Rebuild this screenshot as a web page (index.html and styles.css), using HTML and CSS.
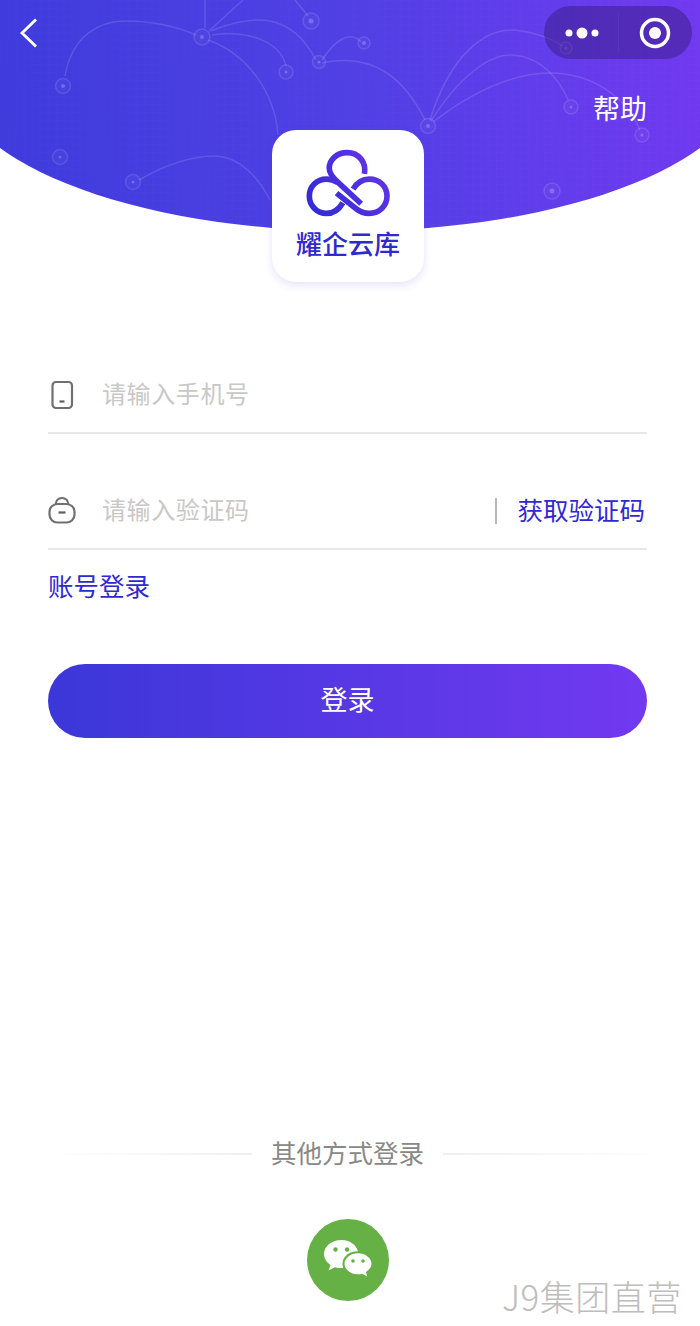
FILE: index.html
```html
<!DOCTYPE html>
<html lang="zh-CN">
<head>
<meta charset="utf-8">
<title>耀企云库</title>
<link rel="stylesheet" href="styles.css">
</head>
<body>
<div class="page">
  <header class="hero">
    <svg class="hero-bg" viewBox="0 0 700 232" width="700" height="232" aria-hidden="true">
      <defs>
        <linearGradient id="heroGrad" gradientUnits="userSpaceOnUse" x1="0" y1="120" x2="700" y2="60">
          <stop offset="0" stop-color="#3f3bdd"/>
          <stop offset="0.5" stop-color="#5040e5"/>
          <stop offset="1" stop-color="#7139f0"/>
        </linearGradient>
        <pattern id="grid" width="8" height="8" patternUnits="userSpaceOnUse">
          <path d="M8 0H0V8" fill="none" stroke="#ffffff" stroke-opacity="0.012"/>
        </pattern>
      </defs>
      <ellipse cx="350" cy="70" rx="400" ry="161" fill="url(#heroGrad)"/>
      <ellipse cx="350" cy="70" rx="400" ry="161" fill="url(#grid)"/>
      <g class="net">
        <path d="M65 76C72 35 100 21 125 21C155 21 180 28 196 35"/>
        <path d="M212 35C245 30 280 40 286 66"/>
        <path d="M208 40C250 55 275 95 278 135"/>
        <path d="M205 28V0"/>
        <path d="M209 31L243 0"/>
        <path d="M211 31C250 15 290 10 316 60"/>
        <path d="M295 0L308 16"/>
        <path d="M322 60C335 40 350 30 361 42"/>
        <path d="M322 63C375 52 405 80 425 120"/>
        <path d="M430 120C450 55 485 28 515 30C535 32 550 38 563 46"/>
        <path d="M431 121C460 75 490 55 510 55C540 55 560 80 568 100"/>
        <path d="M433 122C475 90 515 73 550 73C590 73 625 95 640 130"/>
        <path d="M139 180C165 165 190 156 215 156C240 156 260 180 270 200"/>
      </g>
      <g class="nodes">
        <circle cx="63" cy="86" r="7.500"/><circle cx="202" cy="37" r="8"/>
        <circle cx="286" cy="72" r="7"/><circle cx="311" cy="21" r="8"/>
        <circle cx="319" cy="62" r="6.500"/><circle cx="364" cy="43" r="6"/>
        <circle cx="60" cy="157" r="7.500"/><circle cx="133" cy="182" r="7.500"/>
        <circle cx="428" cy="126" r="7.500"/><circle cx="566" cy="48" r="6"/>
        <circle cx="571" cy="107" r="7"/><circle cx="642" cy="135" r="7"/>
        <circle cx="552" cy="191" r="8"/>
      </g>
      <g class="dots">
        <circle cx="63" cy="86" r="2"/><circle cx="202" cy="37" r="2"/>
        <circle cx="286" cy="72" r="1.500"/><circle cx="311" cy="21" r="2.500"/>
        <circle cx="319" cy="62" r="1.500"/><circle cx="364" cy="43" r="2"/>
        <circle cx="60" cy="157" r="1.500"/><circle cx="133" cy="182" r="1.500"/>
        <circle cx="428" cy="126" r="2"/><circle cx="566" cy="48" r="1.500"/>
        <circle cx="571" cy="107" r="1.500"/><circle cx="642" cy="135" r="1.500"/>
        <circle cx="552" cy="191" r="2.500"/>
      </g>
    </svg>
    <svg class="back" viewBox="0 0 20 32" width="20" height="32" aria-hidden="true">
      <path d="M17 2.500L3 16L17 29.500" fill="none" stroke="#fff" stroke-width="2.800"/>
    </svg>
    <div class="capsule">
      <svg class="capsule-more" viewBox="0 0 40 12" width="40" height="12" aria-hidden="true">
        <circle cx="5" cy="6" r="3.500"/><circle cx="18" cy="6" r="5.500"/><circle cx="31" cy="6" r="3.500"/>
      </svg>
      <span class="capsule-line"></span>
      <svg class="capsule-close" viewBox="0 0 32 32" width="32" height="32" aria-hidden="true">
        <circle cx="16" cy="16" r="13.500" fill="none" stroke="#fff" stroke-width="3.500"/>
        <circle cx="16" cy="16" r="6" fill="#fff"/>
      </svg>
    </div>
    <a class="help">帮助</a>
    <div class="logo">
      <svg class="logo-mark" viewBox="130 80 265 215" width="88" height="72" aria-hidden="true">
        <defs>
          <linearGradient id="logoGrad" gradientUnits="userSpaceOnUse" x1="140" y1="280" x2="385" y2="90">
            <stop offset="0" stop-color="#2f2bd8"/>
            <stop offset="1" stop-color="#6a35e8"/>
          </linearGradient>
        </defs>
        <path class="logo-path" d="M312 160C318 125 295 96 260 96C228 96 206 118 206 143C206 160 220 175 235 188L302 250"/>
        <path class="logo-path" d="M247 247C235 268 218 279 198 279C168 279 146 255 146 227C146 198 168 176 198 176C212 176 222 180 232 186"/>
        <path class="logo-path" d="M228 218L288 266C298 274 312 279 326 279C358 279 380 255 380 227C380 198 358 176 326 176C308 176 290 186 278 206"/>
      </svg>
      <div class="logo-name">耀企云库</div>
    </div>
  </header>

  <main class="form">
    <div class="field">
      <svg class="field-icon" viewBox="0 0 28 30" width="28" height="30" aria-hidden="true">
        <rect x="4.500" y="2" width="19.500" height="26" rx="3.500" fill="none" stroke="#707070" stroke-width="2.200"/>
        <path d="M11.500 21.500H16.500" stroke="#606060" stroke-width="2.200"/>
      </svg>
      <span class="placeholder">请输入手机号</span>
    </div>
    <div class="field field-code">
      <svg class="field-icon" viewBox="0 0 28 30" width="28" height="30" aria-hidden="true">
        <path d="M7.500 9C8 3.500 11 2 14 2C17 2 20 3.500 20.500 9" fill="none" stroke="#707070" stroke-width="2"/>
        <rect x="1.500" y="8" width="25" height="18.500" rx="8" fill="none" stroke="#707070" stroke-width="2.200"/>
        <path d="M10.500 16.500H17.500" stroke="#606060" stroke-width="2.200"/>
      </svg>
      <span class="placeholder">请输入验证码</span>
      <span class="field-sep"></span>
      <a class="code-link">获取验证码</a>
    </div>
    <a class="account-link">账号登录</a>
    <button class="submit" type="button">登录</button>
  </main>

  <footer class="other">
    <div class="other-title">
      <span class="rule rule-left"></span>
      <span class="other-text">其他方式登录</span>
      <span class="rule rule-right"></span>
    </div>
    <div class="wechat">
      <svg viewBox="0 0 50 44" width="50" height="44" aria-hidden="true">
        <path class="bubble" d="M18.500 2C8.800 2 1 8.300 1 16C1 20.400 3.500 24.300 7.500 26.900L5.500 32.500L12 29.200C14 29.800 16.200 30.100 18.500 30.100C19.100 30.100 19.700 30.100 20.300 30C19.800 28.700 19.500 27.200 19.500 25.800C19.500 18.500 26.500 13 35 13.300C33.200 6.800 26.600 2 18.500 2Z"/>
        <path class="bubble" d="M35 15.200C27.400 15.200 21.500 20 21.500 25.800C21.500 31.600 27.400 36.300 35 36.300C36.500 36.300 38 36.100 39.300 35.700L44.300 38.500L42.900 34C46.300 32 48.500 29.100 48.500 25.800C48.500 20 42.600 15.200 35 15.200Z"/>
        <circle class="eye" cx="12.500" cy="11.500" r="2.200"/><circle class="eye" cx="24" cy="11.500" r="2.200"/>
        <circle class="eye" cx="30" cy="23" r="1.800"/><circle class="eye" cx="40" cy="23" r="1.800"/>
      </svg>
    </div>
  </footer>
  <div class="watermark">J9集团直营</div>
</div>
</body>
</html>
```

FILE: styles.css
```css
* { box-sizing: border-box; }
html, body { margin: 0; padding: 0; background: #fff; }
body { font-family: "Noto Sans CJK SC", "Noto Sans", sans-serif; }

.page {
  position: relative;
  width: 700px;
  height: 1326px;
  overflow: hidden;
  display: flex;
  flex-direction: column;
}

/* header */
.hero { position: relative; height: 232px; flex: none; }
.hero-bg { position: absolute; left: 0; top: 0; display: block; }
.net path { fill: none; stroke: #fff; stroke-opacity: 0.13; stroke-width: 1.500; }
.nodes circle { fill: #fff; fill-opacity: 0.03; stroke: #fff; stroke-opacity: 0.12; stroke-width: 1.500; }
.dots circle { fill: #fff; fill-opacity: 0.22; }

.back { position: absolute; left: 19px; top: 17px; }

.capsule {
  position: absolute;
  left: 544px;
  top: 6px;
  width: 148px;
  height: 53px;
  border-radius: 27px;
  background: rgba(52, 24, 120, 0.45);
  display: flex;
  align-items: center;
}
.capsule-more { margin-left: 20px; fill: #fff; }
.capsule-line { width: 1px; height: 40px; margin-left: 14px; background: rgba(255, 255, 255, 0.05); }
.capsule-close { margin-left: 20px; }

.help {
  position: absolute;
  left: 593px;
  top: 89px;
  color: #fff;
  font-size: 27px;
  line-height: 38px;
}

.logo {
  position: absolute;
  left: 272px;
  top: 130px;
  width: 152px;
  height: 152px;
  background: #fff;
  border-radius: 24px;
  box-shadow: 0 3px 8px rgba(80, 60, 220, 0.14);
  display: flex;
  flex-direction: column;
  align-items: center;
}
.logo-mark { margin-top: 17px; flex: none; }
.logo-path { fill: none; stroke: url(#logoGrad); stroke-width: 17; stroke-linecap: butt; }
.logo-name {
  margin-top: 6px;
  color: #2f2ad0;
  font-size: 26px;
  line-height: 36px;
  font-weight: 500;
}

/* form */
.form {
  flex: none;
  padding: 125px 53px 0 48px;
  display: flex;
  flex-direction: column;
}
.field {
  height: 77px;
  border-bottom: 2px solid #e8e8e8;
  display: flex;
  align-items: center;
  padding-top: 1px;
}
.field-code { margin-top: 39px; }
.field-icon { flex: none; margin-right: 26px; }
.placeholder { color: #c8c8c8; font-size: 24px; letter-spacing: 0.6px; line-height: 34px; margin-bottom: 4px; }
.field-sep { width: 2px; height: 26px; margin-left: auto; margin-bottom: 1px; background: #b8b8b8; }
.code-link {
  margin-left: 20px;
  margin-right: 2px;
  margin-bottom: 5px;
  color: #2f2ad0;
  font-size: 25.500px;
  line-height: 36px;
}
.account-link {
  margin-top: 17px;
  color: #2f2ad0;
  font-size: 25.500px;
  line-height: 36px;
}
.submit {
  margin-top: 61px;
  width: 599px;
  height: 74px;
  border: 0;
  border-radius: 37px;
  padding: 0 0 6px;
  background: linear-gradient(90deg, #3b37d8, #7239f0);
  color: #fff;
  font-family: inherit;
  font-size: 27px;
}

/* other */
.other { margin-top: auto; padding-bottom: 25px; display: flex; flex-direction: column; align-items: center; }
.other-title { width: 100%; display: flex; align-items: center; padding-left: 50px; }
.other-text { color: #888; font-size: 25.500px; line-height: 36px; margin: 0 19px 5px; white-space: nowrap; }
.rule { height: 2px; flex: none; margin-bottom: 2px; }
.rule-left { width: 202px; background: linear-gradient(90deg, #fff, #efefef); }
.rule-right { width: 220px; background: linear-gradient(90deg, #efefef, #fff); }
.wechat {
  margin-top: 44px;
  margin-right: 4px;
  width: 82px;
  height: 82px;
  border-radius: 50%;
  background: #65b146;
  display: flex;
  align-items: center;
  justify-content: center;
}
.bubble { fill: #fff; }
.eye { fill: #65b146; }

.watermark {
  position: absolute;
  left: 502px;
  top: 1271px;
  color: #bdbdbd;
  font-size: 35px;
  line-height: 50px;
  font-weight: 300;
  letter-spacing: 0.5px;
  white-space: nowrap;
}
```
